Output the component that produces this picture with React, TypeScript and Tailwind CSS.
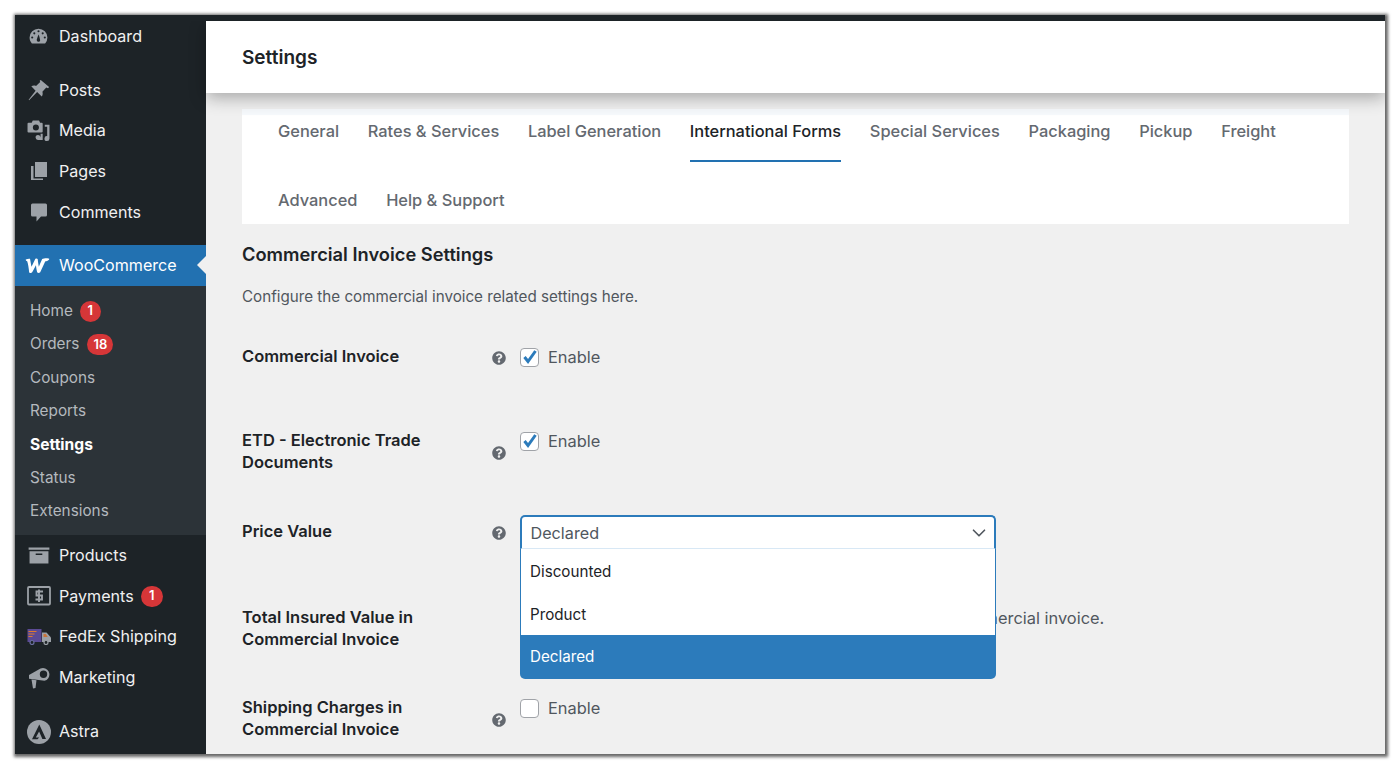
import type { ReactNode } from "react";
import { FaQuestionCircle } from "react-icons/fa";
import { ChevronDown } from "lucide-react";

const ICON = "#9ca1a7";

const icons: Record<string, ReactNode> = {
  dashboard: (
    <svg viewBox="0 0 20 20" className="w-[21px] h-[21px]" fill={ICON}>
      <path d="M10 2.500a8.500 8.500 0 0 0-8.500 8.500c0 2.200.8 4.100 2.200 5.600h12.600a8.400 8.400 0 0 0 2.200-5.600A8.500 8.500 0 0 0 10 2.500zM4 12a1 1 0 1 1 0-2 1 1 0 0 1 0 2zm2-4a1 1 0 1 1 0-2 1 1 0 0 1 0 2zm4-2a1 1 0 1 1 0-2 1 1 0 0 1 0 2zm1.200 8.500a1.700 1.700 0 0 1-2.900-1.100c0-.5 1.300-4.400 1.900-5.400.4 1.100 1.400 5 1.400 5.500 0 .4-.2.700-.4 1zM14 8a1 1 0 1 1 0-2 1 1 0 0 1 0 2zm2 4a1 1 0 1 1 0-2 1 1 0 0 1 0 2z" />
    </svg>
  ),
  posts: (
    <svg viewBox="0 0 20 20" className="w-[22px] h-[22px]" fill={ICON}>
      <path d="M11.600.8l7.600 6.400-1 1.100-1.600-.5-3.500 3.700c.5 1.600.3 3.100-.6 4.300L8.300 11.900 1 19.300l-.4-.4L6.900 10.600 3 6.700c1.300-.9 2.800-1 4.300-.4l3.800-3.500-.5-1.200 1-.8z" />
    </svg>
  ),
  media: (
    <svg viewBox="0 0 22 22" className="w-[23px] h-[23px]" fill={ICON}>
      <path fillRule="evenodd" d="M5.500 1.500h6l1 2h1.500a1 1 0 0 1 1 1v7.500a1 1 0 0 1-1 1H1.500a1 1 0 0 1-1-1V4.500a1 1 0 0 1 1-1H4.500l1-2zm3 3.700a2.900 2.900 0 1 0 0 5.800 2.900 2.900 0 0 0 0-5.800z" />
      <path d="M17 5.500h4.500v13.200a2.400 2.400 0 1 1-2.200-2.400V7.500H17v-2zM10.800 20a2.400 2.400 0 1 1 2.200-2.400V14h2v6h-4.200z" />
    </svg>
  ),
  pages: (
    <svg viewBox="0 0 20 20" className="w-[20px] h-[20px]" fill={ICON}>
      <path d="M6 1h12v15H6z" />
      <path d="M2 5h2.500v12.500H14V19H2z" />
    </svg>
  ),
  comments: (
    <svg viewBox="0 0 20 20" className="w-[20px] h-[20px]" fill={ICON}>
      <path d="M3.500 1.500h13A1.500 1.500 0 0 1 18 3v10a1.500 1.500 0 0 1-1.500 1.500H12L7.500 19.500v-5h-4A1.500 1.500 0 0 1 2 13V3a1.500 1.500 0 0 1 1.500-1.500z" />
    </svg>
  ),
  woo: (
    <svg viewBox="0 0 26 16" className="w-[25px] h-[15px]" fill="#fff">
      <path d="M.5 1.500C2 .8 4 .5 5 .8c.6 2.800 1 6 1.600 8.500L10.600 1c.8-.6 2-.6 2.600.1.300 2.600.6 5.400 1.200 8.200 1.200-3 2.400-5.700 3.600-8.200 1.500-.8 6.500-1.200 7.500-.2.300 1.800-3 2.500-4.300 2.800-1.600 3.500-3.500 7.500-5.300 11.500-1 .9-2.400 1-3.300.1-.6-2.500-.9-5-1.300-7.700-1.400 2.700-2.700 5.200-4 7.700-1 .9-2.300 1-3.200.1C3.700 10.700 3 6.500 2 3.500 1.200 3.200.2 2.600.5 1.500z" />
    </svg>
  ),
  products: (
    <svg viewBox="0 0 22 18" className="w-[22px] h-[17px]" fill={ICON}>
      <path fillRule="evenodd" d="M0 .5h22v2.500H0zM1 4.500h20V17.500H1zM7.500 7v1.500h7V7z" />
    </svg>
  ),
  payments: (
    <svg viewBox="0 0 24 20" className="w-[24px] h-[20px]">
      <rect x="1" y="1" width="22" height="17.500" rx="1" fill="none" stroke={ICON} strokeWidth="1.800" />
      <path d="M16 5.500H9.500v4H15v4H8.500M12 3.500v12.500" fill="none" stroke={ICON} strokeWidth="1.900" />
    </svg>
  ),
  fedex: (
    <svg viewBox="0 0 24 16" className="w-[24px] h-[16px]">
      <path d="M.5 0h14v13H.5z" fill="#5b4a94" />
      <path d="M1.500 2.500h8M1.500 5h6M1.500 7.500h4" stroke="#e07b2e" strokeWidth="1" />
      <path d="M15 3.500h4.500L24 8.500V13h-9z" fill={ICON} />
      <path d="M16.500 5h2.300l2 3h-4.300z" fill="#c9743a" />
      <circle cx="5" cy="13.500" r="2" fill="#1d2327" stroke="#6b6fa0" strokeWidth="1.200" />
      <circle cx="19" cy="13.500" r="2" fill="#1d2327" stroke={ICON} strokeWidth="1.200" />
    </svg>
  ),
  marketing: (
    <svg viewBox="0 0 22 22" className="w-[22px] h-[22px]" fill={ICON}>
      <path fillRule="evenodd" d="M15 1a6.500 6.500 0 0 1 1.500 12.800L1 11.800V8L12.500 1.500c.8-.3 1.600-.5 2.500-.5zm.5 2.500a3.700 3.700 0 1 0 0 7.400 3.700 3.700 0 0 0 0-7.400z" />
      <path d="M3.500 12.500l5 .8-1 7.700-2.500.5z" />
    </svg>
  ),
  astra: (
    <svg viewBox="0 0 24 24" className="w-[24px] h-[24px]">
      <circle cx="12" cy="12" r="12" fill={ICON} />
      <path d="M12.300 4.500L19 19h-3.600l-3.300-7.400L8.800 17.500h3.400l-1.700 1.800H5z" fill="#1d2327" />
    </svg>
  ),
};

function Badge({ children, className }: { children: ReactNode; className: string }) {
  return (
    <span className={`flex h-[21px] items-center justify-center rounded-full bg-[#d63638] text-[13px] font-semibold text-white ${className}`}>
      {children}
    </span>
  );
}

function MenuItem({ icon, label, h, children }: { icon: string; label: string; h: string; children?: ReactNode }) {
  return (
    <div className={`flex items-center text-[#f0f0f1] ${h}`}>
      <span className="flex w-[44px] shrink-0 justify-center pl-[3px]">{icons[icon]}</span>
      <span>{label}</span>
      {children}
    </div>
  );
}

function SubItem({ label, active, children }: { label: string; active?: boolean; children?: ReactNode }) {
  return (
    <div className={`flex h-[33.4px] items-center pl-[15px] ${active ? "text-[15.600px] font-bold text-white" : "text-[15.300px] text-[#b4b9be]"}`}>
      <span>{label}</span>
      {children}
    </div>
  );
}

function Sidebar() {
  return (
    <aside className="w-[191px] shrink-0 bg-[#1d2327] text-[16.100px]">
      <MenuItem icon="dashboard" label="Dashboard" h="h-[42px]" />
      <div className="h-[13.500px]" />
      <MenuItem icon="posts" label="Posts" h="h-[39px]" />
      <MenuItem icon="media" label="Media" h="h-[41px]" />
      <MenuItem icon="pages" label="Pages" h="h-[41px]" />
      <MenuItem icon="comments" label="Comments" h="h-[41px]" />
      <div className="h-[12.500px]" />
      <div className="relative flex h-[41px] items-center bg-[#2271b1] pb-[1px] text-white">
        <span className="flex w-[44px] shrink-0 justify-center pl-[1px]">{icons.woo}</span>
        <span>WooCommerce</span>
        <span className="absolute right-0 top-[11px] h-0 w-0 border-y-[9px] border-r-[9px] border-y-transparent border-r-[#f0f0f0]" />
      </div>
      <div className="h-[249px] bg-[#2c3338] pt-[8.500px]">
        <SubItem label="Home">
          <Badge className="ml-[7px] w-[21px]">1</Badge>
        </SubItem>
        <SubItem label="Orders">
          <Badge className="ml-[8px] w-[26px]">18</Badge>
        </SubItem>
        <SubItem label="Coupons" />
        <SubItem label="Reports" />
        <SubItem label="Settings" active />
        <SubItem label="Status" />
        <SubItem label="Extensions" />
      </div>
      <MenuItem icon="products" label="Products" h="h-[41px]" />
      <MenuItem icon="payments" label="Payments" h="h-[40px]">
        <Badge className="ml-[7px] w-[22px]">1</Badge>
      </MenuItem>
      <MenuItem icon="fedex" label="FedEx Shipping" h="h-[41px]" />
      <MenuItem icon="marketing" label="Marketing" h="h-[41px]" />
      <div className="h-[13px]" />
      <MenuItem icon="astra" label="Astra" h="h-[41px]" />
    </aside>
  );
}

function Tab({ label, active }: { label: string; active?: boolean }) {
  return (
    <div className={`h-[47px] border-b-2 font-medium leading-[32px] ${active ? "border-[#2271b1] text-[#1d2327]" : "border-transparent text-[#646970]"}`}>
      {label}
    </div>
  );
}

function Tabs() {
  return (
    <div className="mt-[16px] h-[115px] bg-white text-[16.400px]">
      <div className="h-[6px] bg-[#f6f9fc]" />
      <div className="flex flex-wrap gap-x-[28.700px] gap-y-[22px] px-[36px]">
        <Tab label="General" />
        <Tab label="Rates & Services" />
        <Tab label="Label Generation" />
        <Tab label="International Forms" active />
        <Tab label="Special Services" />
        <Tab label="Packaging" />
        <Tab label="Pickup" />
        <Tab label="Freight" />
        <Tab label="Advanced" />
        <Tab label="Help & Support" />
      </div>
    </div>
  );
}

function Checkbox({ checked }: { checked?: boolean }) {
  return (
    <span className="flex h-[19px] w-[19px] shrink-0 items-center justify-center rounded-[4px] border border-[#a0a3a8] bg-white">
      {checked && (
        <svg viewBox="0 0 16 16" className="h-[16px] w-[16px]" fill="none" stroke="#2c7bbb" strokeWidth="3">
          <path d="M2.500 8l3.500 4.500 7.500-10.500" />
        </svg>
      )}
    </span>
  );
}

function Row({ label, h, helpTop, children }: { label: ReactNode; h: string; helpTop?: string; children?: ReactNode }) {
  return (
    <div className={`flex ${h}`}>
      <div className="w-[250px] shrink-0 text-[16.500px] font-semibold leading-[22px] text-[#1d2327]">{label}</div>
      <div className={`w-[28px] shrink-0 ${helpTop ?? ""}`}>
        {helpTop && <FaQuestionCircle className="text-[#646970]" size={14} />}
      </div>
      {children}
    </div>
  );
}

function Enable({ checked }: { checked?: boolean }) {
  return (
    <div className="mt-[1px] flex h-[22px] items-center gap-[9px] whitespace-nowrap text-[#50575e]">
      <Checkbox checked={checked} />
      <span>Enable</span>
    </div>
  );
}

function PriceSelect() {
  return (
    <div className="absolute left-[277.500px] top-[-5px] z-10 w-[476px] text-[15.200px]">
      <div className="flex h-[34px] items-center justify-between rounded-t-[5px] border-x-2 border-t-2 border-[#2c7bbb] border-b border-b-[#d8e8f5] bg-white pl-[9px] pr-[4px] pt-[1px] text-[16.200px] text-[#50575e]">
        <span>Declared</span>
        <ChevronDown size={22} strokeWidth={1.8} className="text-[#50575e]" />
      </div>
      <div className="border-x border-[#2c7bbb] bg-white text-[#1d2327]">
        <div className="flex h-[43px] items-center pl-[9.500px] pt-[3px]">Discounted</div>
        <div className="flex h-[43px] items-center pl-[9.500px] pt-[3px]">Product</div>
      </div>
      <div className="flex h-[44px] items-center rounded-b-[5px] bg-[#2c7bbb] pl-[10.500px] text-white">Declared</div>
    </div>
  );
}

export default function App() {
  return (
    <div className="h-[768px] w-[1400px] overflow-hidden bg-white pl-[15px] pt-[15px] [font-family:Inter,'Liberation_Sans',sans-serif]">
      <div className="flex h-[739px] w-[1370px] overflow-hidden border-t-[6px] border-[#1d2327] shadow-[1px_1px_3px_2px_rgba(0,0,0,0.6)]">
        <div className="-mt-[6px] flex">
          <Sidebar />
        </div>
        <main className="min-w-0 flex-1 bg-[#f0f0f0] text-[16.400px]">
          <header className="relative z-10 flex h-[72px] items-center bg-white pl-[36px] pt-[2px] text-[19px] font-semibold text-[#1d2327] shadow-[0_5px_16px_rgba(0,0,0,0.3)]">
            Settings
          </header>
          <div className="pl-[36px] pr-[36px]">
            <Tabs />
            <h2 className="mt-[18px] text-[18.300px] font-semibold leading-[24px] text-[#1d2327]">Commercial Invoice Settings</h2>
            <p className="mt-[20px] text-[15.200px] leading-[22px] text-[#50575e]">Configure the commercial invoice related settings here.</p>
            <div className="mt-[37px]">
              <Row label="Commercial Invoice" h="h-[84px]" helpTop="pt-[6px]">
                <Enable checked />
              </Row>
              <Row label={<>ETD - Electronic Trade<br />Documents</>} h="h-[91px]" helpTop="pt-[17px]">
                <Enable checked />
              </Row>
              <div className="relative">
                <Row label="Price Value" h="h-[86px]" helpTop="pt-[6px]" />
                <PriceSelect />
              </div>
              <Row label={<>Total Insured Value in<br />Commercial Invoice</>} h="h-[90px]">
                <div className="mt-[1px] flex h-[22px] items-center gap-[9px] whitespace-nowrap text-[#50575e]">
                  <Checkbox />
                  <span>Enable this option to show the total insured value in commercial invoice.</span>
                </div>
              </Row>
              <Row label={<>Shipping Charges in<br />Commercial Invoice</>} h="h-[60px]" helpTop="pt-[17px]">
                <Enable />
              </Row>
            </div>
          </div>
        </main>
      </div>
    </div>
  );
}
